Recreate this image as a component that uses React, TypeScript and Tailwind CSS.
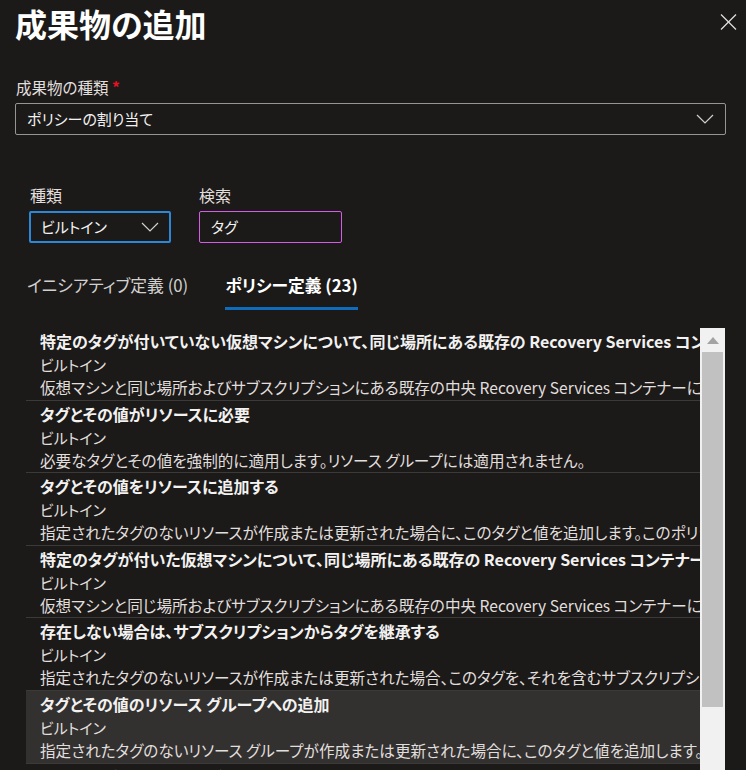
import React from 'react';

interface Policy {
    title: string;
    kind: string;
    description: string;
}

const policies: Policy[] = [
    {
        title: '特定のタグが付いていない仮想マシンについて、同じ場所にある既存の Recovery Services コンテナーにバックアップを構成する',
        kind: 'ビルトイン',
        description: '仮想マシンと同じ場所およびサブスクリプションにある既存の中央 Recovery Services コンテナーにバックアップすることで、すべての仮想マシンのバックアップを強制します。',
    },
    {
        title: 'タグとその値がリソースに必要',
        kind: 'ビルトイン',
        description: '必要なタグとその値を強制的に適用します。リソース グループには適用されません。',
    },
    {
        title: 'タグとその値をリソースに追加する',
        kind: 'ビルトイン',
        description: '指定されたタグのないリソースが作成または更新された場合に、このタグと値を追加します。このポリシーは既存のリソースのタグを変更しません。',
    },
    {
        title: '特定のタグが付いた仮想マシンについて、同じ場所にある既存の Recovery Services コンテナーにバックアップを構成する',
        kind: 'ビルトイン',
        description: '仮想マシンと同じ場所およびサブスクリプションにある既存の中央 Recovery Services コンテナーにバックアップすることで、すべての仮想マシンのバックアップを強制します。',
    },
    {
        title: '存在しない場合は、サブスクリプションからタグを継承する',
        kind: 'ビルトイン',
        description: '指定されたタグのないリソースが作成または更新された場合、このタグを、それを含むサブスクリプションの値と共に追加します。',
    },
    {
        title: 'タグとその値のリソース グループへの追加',
        kind: 'ビルトイン',
        description: '指定されたタグのないリソース グループが作成または更新された場合に、このタグと値を追加します。',
    },
    {
        title: 'リソース グループからタグを継承する',
        kind: 'ビルトイン',
        description: '指定されたタグのないリソースが作成または更新された場合に、親リソース グループのタグと値を追加します。',
    },
];

function Chevron() {
    return (
        <svg width="18" height="10" viewBox="0 0 18 10" fill="none">
            <polyline points="1,1 9,9 17,1" stroke="#d2d0ce" strokeWidth="1.2" />
        </svg>
    );
}

export default function App() {
    return (
        <div
            className="w-[746px] h-[770px] overflow-hidden bg-[#1b1a19] text-[#f3f2f1] [font-feature-settings:'palt']"
            style={{ fontFamily: '"Noto Sans CJK JP", "Noto Sans", sans-serif' }}
        >
            {/* Header */}
            <div className="flex justify-between items-start">
                <h1 className="ml-[15px] text-[32px] leading-[46px] font-bold text-white">成果物の追加</h1>
                <button className="mt-[14px] mr-[9px]" title="閉じる">
                    <svg width="17" height="16" viewBox="0 0 17 16">
                        <line x1="1" y1="0.5" x2="16" y2="15.5" stroke="#e1dfdd" strokeWidth="1.3" />
                        <line x1="16" y1="0.5" x2="1" y2="15.5" stroke="#e1dfdd" strokeWidth="1.3" />
                    </svg>
                </button>
            </div>

            {/* Artifact type */}
            <div className="mt-[30px] ml-[16px] text-[15.5px] leading-[22px] text-[#e1dfdd]">
                成果物の種類 <span className="text-[#e81123] font-bold">*</span>
            </div>
            <div className="mt-[5px] ml-[15px] w-[711px] h-[32px] border border-[#979593] rounded-[2px] flex items-center justify-between pl-[11px] pr-[11px]">
                <span className="text-[15px] text-[#f3f2f1]">ポリシーの割り当て</span>
                <Chevron />
            </div>

            {/* Filters */}
            <div className="mt-[48px] ml-[29px] flex gap-[28px]">
                <div className="flex flex-col">
                    <span className="text-[16px] leading-[24px] text-[#e1dfdd] ml-[1px]">種類</span>
                    <div className="mt-[4px] w-[142px] h-[32px] border-2 border-[#2b88d8] rounded-[2px] flex items-center justify-between pl-[10px] pr-[10px]">
                        <span className="text-[15px] text-[#f3f2f1]">ビルトイン</span>
                        <Chevron />
                    </div>
                </div>
                <div className="flex flex-col">
                    <span className="text-[16px] leading-[24px] text-[#e1dfdd]">検索</span>
                    <div className="mt-[4px] w-[143px] h-[32px] border border-[#d65be6] rounded-[2px] flex items-center pl-[11px]">
                        <span className="text-[15px] text-[#f3f2f1]">タグ</span>
                    </div>
                </div>
            </div>

            {/* Tabs */}
            <div className="mt-[30px] ml-[27px] flex gap-[37px] text-[16.8px] leading-[24px]">
                <div className="pb-[10px] text-[#d2d0ce]">イニシアティブ定義 (0)</div>
                <div className="pb-[10px] font-bold text-white border-b-[3px] border-[#0f6cbd]">ポリシー定義 (23)</div>
            </div>

            {/* List */}
            <div className="mt-[18px] ml-[26px] flex">
                <div className="w-[674px]">
                    {policies.map((p, i) => (
                        <div
                            key={i}
                            className={`pl-[14px] pt-[2px] pb-[1px] border-b border-[#3b3a39] overflow-hidden whitespace-nowrap ${
                                i === 5 ? 'bg-[#323130]' : ''
                            }`}
                        >
                            <div className="text-[16px] leading-[23px] font-bold text-[#f3f2f1]">{p.title}</div>
                            <div className="text-[15px] leading-[23px] text-[#e1dfdd]">{p.kind}</div>
                            <div className="text-[15.6px] leading-[22.6px] text-[#e1dfdd]">{p.description}</div>
                        </div>
                    ))}
                </div>
                {/* Scrollbar */}
                <div className="w-[25px] h-[460px] bg-[#f1f1f1] flex flex-col items-center">
                    <div className="h-[24px] flex items-center justify-center">
                        <svg width="12" height="7" viewBox="0 0 12 7">
                            <polygon points="0,7 6,0 12,7" fill="#a3a3a3" />
                        </svg>
                    </div>
                    <div className="w-[21px] h-[355px] bg-[#c1c1c1]" />
                </div>
            </div>
        </div>
    );
}
